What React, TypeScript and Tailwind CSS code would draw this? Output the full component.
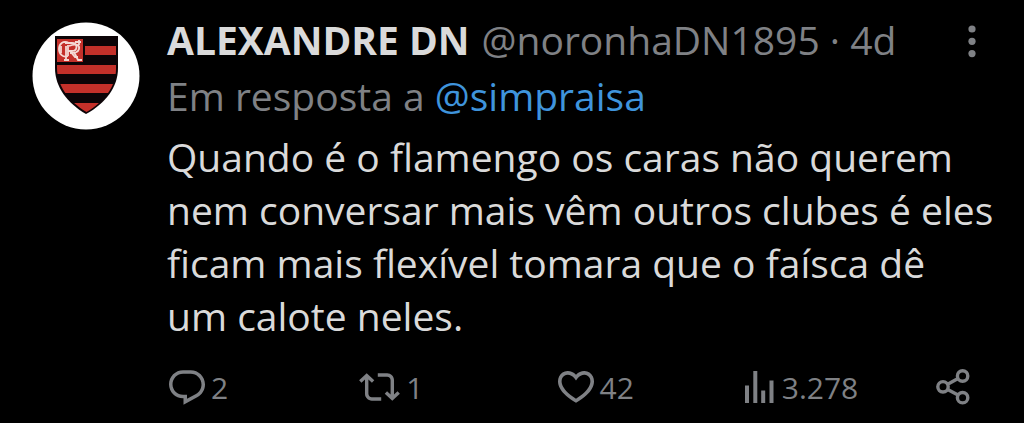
import React from 'react';

interface ActionProps {
  label: string;
  count?: string;
  className?: string;
  children: React.ReactNode;
}

function Action({ label, count, className = '', children }: ActionProps) {
  return (
    <button type="button" aria-label={label} className={`flex h-10 items-center gap-1.5 text-left text-3xl ${className}`}>
      {children}
      {count && <span className="pt-0.5">{count}</span>}
    </button>
  );
}

function Crest() {
  return (
    <svg viewBox="0 0 108 108" className="h-27 w-27 shrink-0" role="img">
      <defs>
        <clipPath id="shield">
          <path d="M25 16h59v31c0 17-11 32-29.500 43C36 79 25 63 25 46z" />
        </clipPath>
      </defs>
      <circle cx="54" cy="54" r="53.5" fill="#fff" />
      <path d="M23 14h63v32c0 19-12 35-32 46C35 81 23 65 23 46z" fill="#0c0407" />
      <g clipPath="url(#shield)" fill="#c4302a">
        <path d="M25 17h26v23H25zM53 24h32v9H53zM25 43h60v9H25zM25 62h60v9H25zM30 81h48v12H30z" />
      </g>
      <g fill="none" stroke="#f4d9d4" strokeWidth="1.8">
        <path d="M37 21c-6-3-10 1-10 6s4 9 9 7M36 23v11M33 21h7c6 0 6 8 0 8h-4M38 29l5 6h3" />
        <path d="M34 38V24M32 38h5M37 24c7-3 11-1 10 3s-5 4-9 4M42 30l4 8h4M43 20h6M47 18v5M29 24v7" />
      </g>
    </svg>
  );
}

export default function App() {
  return (
    <div className="min-h-screen bg-black font-['Open_Sans','Noto_Sans',sans-serif]">
      <article className="flex gap-[27px] pt-[22px] pr-6 pb-2 pl-8 text-[#7f8185]">
        <Crest />
        <div className="min-w-0 flex-1">
          <header className="-mt-2 flex items-center gap-3 text-[39px] leading-[52px] whitespace-nowrap">
            <h1 className="font-bold text-[#dadada]">ALEXANDRE DN</h1>
            <span>@noronhaDN1895 · 4d</span>
            <button type="button" aria-label="Mais" className="mr-6 ml-auto pt-1">
              <svg viewBox="0 0 8 34" className="h-[34px] w-2" fill="currentColor">
                <circle cx="4" cy="4" r="3.6" />
                <circle cx="4" cy="16.3" r="3.6" />
                <circle cx="4" cy="28.6" r="3.6" />
              </svg>
            </button>
          </header>
          <p className="mt-1 text-[39px] leading-[52px]">
            Em resposta a <a href="#simpraisa" className="text-[#3f94dc]">@simpraisa</a>
          </p>
          <p className="mt-2 text-[39px] leading-[53px] text-[#dadada]">
            Quando é o flamengo os caras não querem<br />
            nem conversar mais vêm outros clubes é eles<br />
            ficam mais flexível tomara que o faísca dê<br />
            um calote neles.
          </p>
          <footer className="mt-[25px] mr-[30px] grid grid-cols-[repeat(4,1fr)_auto]">
            <Action label="Responder" count="2">
              <svg viewBox="1.75 2 20.5 19.7" className="ml-0.5 h-[35px] w-9" fill="currentColor">
                <path d="M1.751 10c0-4.42 3.584-8 8.005-8h4.366c4.49 0 8.129 3.64 8.129 8.13 0 2.96-1.607 5.68-4.196 7.11l-8.054 4.46v-3.69h-.067c-4.49.1-8.183-3.51-8.183-8.01zm8.005-6c-3.317 0-6.005 2.69-6.005 6 0 3.37 2.77 6.08 6.138 6.01l.351-.01h1.761v2.3l5.087-2.81c1.951-1.08 3.163-3.13 3.163-5.36 0-3.39-2.744-6.13-6.129-6.13H9.756z" />
              </svg>
            </Action>
            <Action label="Repostar" count="1">
              <svg viewBox="0 3.8 24 16.4" className="h-7 w-[41px]" fill="currentColor">
                <path d="M4.5 3.88l4.432 4.14-1.364 1.46L5.5 7.55V16c0 1.1.896 2 2 2H13v2H7.5c-2.209 0-4-1.79-4-4V7.55L1.432 9.48.068 8.02 4.5 3.88zM16.5 6H11V4h5.5c2.209 0 4 1.79 4 4v8.45l2.068-1.93 1.364 1.46-4.432 4.14-4.432-4.14 1.364-1.46 2.068 1.93V8c0-1.1-.896-2-2-2z" />
              </svg>
            </Action>
            <Action label="Curtir" count="42" className="pl-1.5">
              <svg viewBox="2 3.5 20 17.7" className="h-8 w-9" fill="currentColor">
                <path d="M16.697 5.5c-1.222-.06-2.679.51-3.89 2.16l-.805 1.09-.806-1.09C9.984 6.01 8.526 5.44 7.304 5.5c-1.243.07-2.349.78-2.91 1.91-.552 1.12-.633 2.78.479 4.82 1.074 1.97 3.257 4.27 7.129 6.61 3.87-2.34 6.052-4.64 7.126-6.61 1.111-2.04 1.03-3.7.477-4.82-.561-1.13-1.666-1.84-2.908-1.91zm4.187 7.69c-1.351 2.48-4.001 5.12-8.379 7.67l-.503.3-.504-.3c-4.379-2.55-7.029-5.19-8.382-7.67-1.36-2.5-1.41-4.86-.514-6.67.887-1.79 2.647-2.91 4.601-3.01 1.651-.09 3.368.56 4.798 2.01 1.429-1.45 3.146-2.1 4.796-2.01 1.954.1 3.714 1.22 4.601 3.01.896 1.81.846 4.17-.514 6.67z" />
              </svg>
            </Action>
            <Action label="Visualizações" count="3.278">
              <svg viewBox="0 0 32 32" className="h-8 w-8" fill="currentColor">
                <path d="M1 14.5h4V32H1zM9.300 0h4v32h-4zM17.200 19.500h4V32h-4zM25.500 9.500h4V32h-4z" />
              </svg>
            </Action>
            <Action label="Compartilhar">
              <svg viewBox="0 0 34 36" className="h-9 w-[34px]" fill="none" stroke="currentColor" strokeWidth="3.4">
                <circle cx="7" cy="17.800" r="5.200" />
                <circle cx="26.600" cy="7" r="5.200" />
                <circle cx="26.600" cy="28.700" r="5.200" />
                <path d="M11.700 15.300l10.300-5.700M11.700 20.400l10.300 5.700" />
              </svg>
            </Action>
          </footer>
        </div>
      </article>
    </div>
  );
}
